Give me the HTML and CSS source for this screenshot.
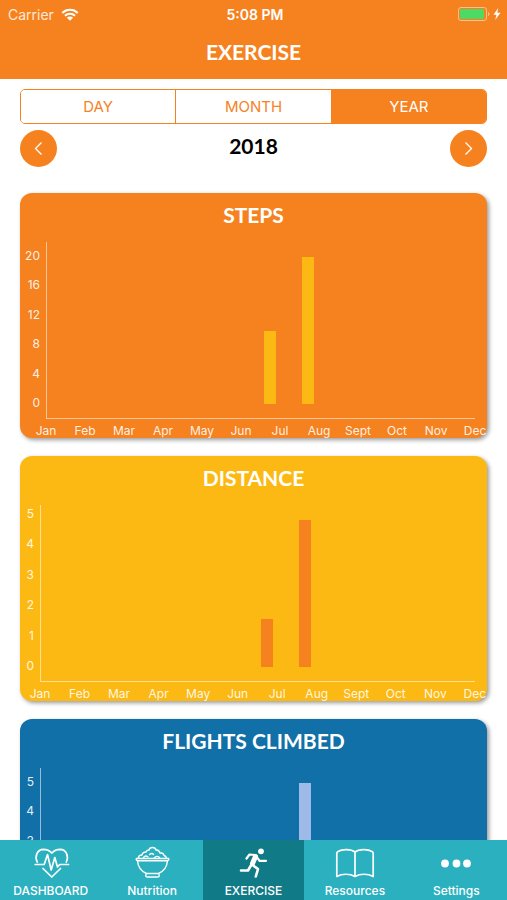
FILE: index.html
```html
<!DOCTYPE html>
<html lang="en">
<head>
<meta charset="utf-8">
<meta name="viewport" content="width=device-width, initial-scale=1">
<title>Exercise</title>
<link rel="stylesheet" href="styles.css">
</head>
<body>
<header class="header">
  <div class="status">
    <div class="status-left">
      <span>Carrier</span>
      <svg class="wifi" viewBox="0 0 18 13" aria-hidden="true">
        <path d="M1.3 4.9a11 11 0 0 1 15.4 0M4 7.8a7.2 7.2 0 0 1 10 0" fill="none" stroke="currentColor" stroke-width="2.1"/>
        <path d="M9 12.8 5.9 9.7a4.4 4.4 0 0 1 6.2 0z" fill="currentColor"/>
      </svg>
    </div>
    <span class="time">5:08 PM</span>
    <div class="status-right">
      <svg class="battery" viewBox="0 0 44 14" aria-hidden="true">
        <rect x=".5" y=".5" width="28" height="13" rx="2.5" fill="none" stroke="#fbc08a"/>
        <rect x="2" y="2" width="24" height="10" rx="1" fill="#4cd964"/>
        <path d="M30 5v4q1.500-.5 1.500-2T30 5z" fill="#fbc08a"/>
        <path d="M40.200 1 35.500 7.800h3L37.200 13l5.300-7.300h-3.200z" fill="#fff"/>
      </svg>
    </div>
  </div>
  <h1 class="title">EXERCISE</h1>
</header>

<main class="content">
  <div class="segments" role="group" aria-label="Period">
    <button type="button" aria-pressed="false">DAY</button>
    <button type="button" aria-pressed="false">MONTH</button>
    <button type="button" aria-pressed="true">YEAR</button>
  </div>
  <div class="period">
    <button class="round" type="button" aria-label="Previous year">
      <svg viewBox="0 0 37 37" aria-hidden="true"><path d="M21.500 12.500 15.500 18.500l6 6"/></svg>
    </button>
    <h2 class="year">2018</h2>
    <button class="round" type="button" aria-label="Next year">
      <svg viewBox="0 0 37 37" aria-hidden="true"><path d="M15.500 12.500l6 6-6 6"/></svg>
    </button>
  </div>

  <div class="cards">
    <section class="card steps">
      <h2>STEPS</h2>
      <div class="chart">
        <div class="y-axis"><span>20</span><span>16</span><span>12</span><span>8</span><span>4</span><span>0</span></div>
        <div class="plot">
          <div class="bars">
            <i class="bar jul" style="height:50%"></i>
            <i class="bar aug" style="height:100%"></i>
          </div>
        </div>
        <div class="x-axis"><span>Jan</span><span>Feb</span><span>Mar</span><span>Apr</span><span>May</span><span>Jun</span><span>Jul</span><span>Aug</span><span>Sept</span><span>Oct</span><span>Nov</span><span>Dec</span></div>
      </div>
    </section>

    <section class="card distance">
      <h2>DISTANCE</h2>
      <div class="chart">
        <div class="y-axis"><span>5</span><span>4</span><span>3</span><span>2</span><span>1</span><span>0</span></div>
        <div class="plot">
          <div class="bars">
            <i class="bar jul" style="height:33%"></i>
            <i class="bar aug" style="height:100%"></i>
          </div>
        </div>
        <div class="x-axis"><span>Jan</span><span>Feb</span><span>Mar</span><span>Apr</span><span>May</span><span>Jun</span><span>Jul</span><span>Aug</span><span>Sept</span><span>Oct</span><span>Nov</span><span>Dec</span></div>
      </div>
    </section>

    <section class="card flights">
      <h2>FLIGHTS CLIMBED</h2>
      <div class="chart">
        <div class="y-axis"><span>5</span><span>4</span><span>3</span><span>2</span><span>1</span><span>0</span></div>
        <div class="plot">
          <div class="bars">
            <i class="bar aug" style="height:100%"></i>
          </div>
        </div>
        <div class="x-axis"><span>Jan</span><span>Feb</span><span>Mar</span><span>Apr</span><span>May</span><span>Jun</span><span>Jul</span><span>Aug</span><span>Sept</span><span>Oct</span><span>Nov</span><span>Dec</span></div>
      </div>
    </section>
  </div>
</main>

<nav class="tabs" aria-label="Main">
  <a href="#dashboard">
    <svg viewBox="0 0 40 36" aria-hidden="true">
      <path d="M6.200 17C3.500 11.500 6 4.500 12.500 4.300c4 0 6.500 1.700 8.300 3.700 1.800-2 4.300-3.700 8.300-3.700C35.500 4.500 38 11.500 35.300 17M12 23.500 20.800 32l8.700-8.500"/>
      <path d="M4.200 19.500h9l3.300-10 3.700 15.500 3.600-12.500 2.700 9.500 2.200-2.500H37.500"/>
    </svg>
    <span>DASHBOARD</span>
  </a>
  <a href="#nutrition">
    <svg class="fine" viewBox="0 0 40 36" aria-hidden="true">
      <path d="M4.500 13.500h32q1 1.500-1 2.300H5.500q-2-.8-1-2.300zM5.500 15.800C6 22 9.500 26.500 14.500 28.500h12c5-2 8.500-6.500 9-12.700M14.500 28.500q-2 3.500 1 3.500h10q3 0 1-3.500"/>
      <path d="M6.500 13q0-3 3.500-3 .5-3 4-3 .5-2 3-2 .5-2.500 3.500-2.500T24 5q3-.5 4 3 3.500-.5 4 2.500 2 .5 2.500 2.500M11.500 12.500q2-2.500 4.500-.5M17.500 9.500q2.500-2 4 0M22.500 13q2-3 5-.5"/>
    </svg>
    <span>Nutrition</span>
  </a>
  <a class="active" href="#exercise" aria-current="page">
    <svg viewBox="0 0 40 36" aria-hidden="true">
      <circle cx="28" cy="6.300" r="2.900" fill="currentColor" stroke="none"/>
      <path d="M13.500 13.500 16.500 9.500l6 .5 4 5.800h6.500" stroke-width="2.200"/>
      <path d="M22.500 11.500 19.500 18.500" stroke-width="5"/>
      <path d="M19.500 20 25 24 22.800 31.500M18.500 19.500 15 25.500H8" stroke-width="2.600"/>
    </svg>
    <span>EXERCISE</span>
  </a>
  <a href="#resources">
    <svg viewBox="0 0 40 36" aria-hidden="true">
      <path d="M20 7C16 4 7 4 3 6.500q-1.200.5-1.200 2V31.500C7 28.500 15 28.500 20 31.500 25 28.500 33 28.500 38.200 31.500V8.500q0-1.500-1.200-2C33 4 24 4 20 7zV31.500"/>
    </svg>
    <span>Resources</span>
  </a>
  <a href="#settings">
    <svg viewBox="0 0 40 36" aria-hidden="true">
      <g fill="currentColor" stroke="none"><circle cx="9" cy="18.500" r="3.900"/><circle cx="20.500" cy="18.500" r="3.900"/><circle cx="31" cy="18.500" r="3.900"/></g>
    </svg>
    <span>Settings</span>
  </a>
</nav>
</body>
</html>
```
FILE: styles.css
```css
* {
  box-sizing: border-box;
}

:root {
  --orange: #f6821f;
  --yellow: #fdb913;
  --blue: #1170a8;
  --teal: #2bb0bf;
}

body {
  margin: 0;
  height: 100vh;
  display: flex;
  flex-direction: column;
  background: #fff;
  color: #000;
  font-family: Inter, "Liberation Sans", sans-serif;
}

h1,
h2 {
  margin: 0;
  font-family: Lato, "Liberation Sans", sans-serif;
  font-size: 21px;
  font-weight: 700;
  text-align: center;
}

button {
  padding: 0;
  font: inherit;
  cursor: pointer;
}

.header {
  flex: none;
  background: var(--orange);
  color: #fff;
  padding-bottom: 9px;
}

.status {
  display: grid;
  grid-template-columns: 1fr auto 1fr;
  align-items: center;
  height: 28px;
  padding: 0 5px 0 8px;
  font-size: 14px;
}

.status-left {
  display: flex;
  align-items: center;
  gap: 7px;
  color: #ffe9d6;
}

.status-right {
  display: flex;
  justify-content: flex-end;
}

.time {
  font-weight: 600;
}

.wifi {
  width: 18px;
  height: 13px;
  color: #fff;
}

.battery {
  width: 44px;
  height: 14px;
}

.title {
  padding-top: 6px;
  line-height: 36px;
}

.content {
  flex: 1;
  min-height: 0;
  overflow-y: auto;
  scrollbar-width: none;
  padding: 10px 20px 18px;
}

.segments {
  display: flex;
  border: 1px solid var(--orange);
  border-radius: 5px;
  overflow: hidden;
}

.segments button {
  flex: 1;
  height: 33px;
  border: 0;
  background: #fff;
  color: var(--orange);
  font-size: 15px;
}

.segments button + button {
  border-left: 1px solid var(--orange);
}

.segments button[aria-pressed="true"] {
  background: var(--orange);
  color: #fff;
}

.period {
  display: flex;
  justify-content: space-between;
  margin-top: 6px;
}

.year {
  line-height: 32px;
}

.round {
  width: 37px;
  height: 37px;
  border: 0;
  border-radius: 50%;
  background: var(--orange);
}

.round svg {
  display: block;
  width: 37px;
  height: 37px;
  fill: none;
  stroke: #fff;
  stroke-width: 1.3;
}

.cards {
  display: flex;
  flex-direction: column;
  gap: 18px;
  margin-top: 26px;
}

.card {
  --y-width: 20px;
  --y-top: 5px;
  border-radius: 12px;
  color: #fff;
  box-shadow: 2px 2px 4px rgba(0, 0, 0, 0.4);
}

.card h2 {
  padding-top: 4px;
  line-height: 36px;
}

.steps {
  --y-width: 26px;
  --bar: var(--yellow);
  background: var(--orange);
}

.distance {
  --y-top: 0px;
  --bar: var(--orange);
  background: var(--yellow);
}

.flights {
  --bar: #9dbae8;
  background: var(--blue);
}

.chart {
  display: grid;
  grid-template-columns: var(--y-width) 1fr;
  grid-template-rows: 177px 19px;
  padding: 9px 12px 0 0;
  font-size: 12px;
}

.y-axis,
.x-axis {
  color: rgba(255, 255, 255, 0.9);
}

.y-axis {
  display: flex;
  flex-direction: column;
  justify-content: space-between;
  padding: var(--y-top) 6px 7px 0;
  line-height: 18px;
  text-align: right;
}

.plot {
  border: solid rgba(255, 255, 255, 0.55);
  border-width: 0 0 1px 1px;
}

/* The twelve bar slots start half a slot before the axis. */
.bars {
  display: grid;
  grid-template-columns: repeat(12, 1fr);
  align-items: end;
  justify-items: center;
  height: 100%;
  margin: 0 -1px 0 -20px;
  padding: 15px 0 14px;
}

.bar {
  grid-row: 1;
  width: 12px;
  background: var(--bar);
}

.jul {
  grid-column: 7;
}

.aug {
  grid-column: 8;
}

.x-axis {
  grid-column: 2;
  display: flex;
  justify-content: space-between;
  line-height: 24px;
}

/* Zero-width items keep each month centred on its tick. */
.x-axis span {
  display: flex;
  justify-content: center;
  width: 0;
}

.tabs {
  flex: none;
  display: grid;
  grid-template-columns: repeat(5, 1fr);
  height: 60px;
  background: var(--teal);
}

.tabs a {
  display: flex;
  flex-direction: column;
  align-items: center;
  padding-top: 5px;
  color: #fff;
  font-size: 12px;
  font-weight: 500;
  line-height: 20px;
  text-decoration: none;
}

.tabs .active {
  background: #107a86;
}

.tabs svg {
  width: 40px;
  height: 36px;
  fill: none;
  stroke: currentColor;
  stroke-width: 1.7;
  stroke-linejoin: round;
  stroke-linecap: round;
}

.tabs .fine {
  stroke-width: 1.4;
}
```
